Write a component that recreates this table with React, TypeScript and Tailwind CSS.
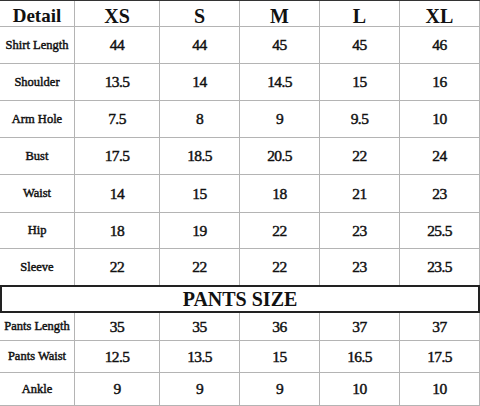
const sizes = ['XS', 'S', 'M', 'L', 'XL'];

type Row = { label: string; values: string[]; h: string; last?: boolean };

const shirtRows: Row[] = [
  { label: 'Shirt Length', values: ['44', '44', '45', '45', '46'], h: 'h-[37px]' },
  { label: 'Shoulder', values: ['13.5', '14', '14.5', '15', '16'], h: 'h-[37px]' },
  { label: 'Arm Hole', values: ['7.5', '8', '9', '9.5', '10'], h: 'h-[37px]' },
  { label: 'Bust', values: ['17.5', '18.5', '20.5', '22', '24'], h: 'h-[37px]' },
  { label: 'Waist', values: ['14', '15', '18', '21', '23'], h: 'h-[38px]' },
  { label: 'Hip', values: ['18', '19', '22', '23', '25.5'], h: 'h-[36px]' },
  { label: 'Sleeve', values: ['22', '22', '22', '23', '23.5'], h: 'h-[36px]', last: true },
];

const pantsRows: Row[] = [
  { label: 'Pants Length', values: ['35', '35', '36', '37', '37'], h: 'h-[28px]' },
  { label: 'Pants Waist', values: ['12.5', '13.5', '15', '16.5', '17.5'], h: 'h-[32px]' },
  { label: 'Ankle', values: ['9', '9', '9', '10', '10'], h: 'h-[33px]' },
];

const cols = 'grid grid-cols-[75px_85px_80px_80px_80px_80px]';
const cell = 'flex items-center justify-center border-r border-[#b4b4b4]';

function SizeRow({ row }: { row: Row }) {
  return (
    <div className={`${cols} ${row.h} ${row.last ? '' : 'border-b border-[#b4b4b4]'}`}>
      <div className={`${cell} text-[12.5px] [-webkit-text-stroke:0.45px_#111]`}>{row.label}</div>
      {row.values.map((v, i) => (
        <div key={i} className={`${cell} text-[15.5px] tracking-[-0.6px] [-webkit-text-stroke:0.45px_#111]`}>{v}</div>
      ))}
    </div>
  );
}

export default function App() {
  return (
    <div className="w-[480px] h-[406px] bg-white text-[#111] overflow-hidden" style={{ fontFamily: '"Liberation Serif", "DejaVu Serif", serif' }}>
      <div className={`${cols} h-[27px] border-t border-t-[#333] border-b border-b-[#b4b4b4]`}>
        <div className={`${cell} text-[19px] font-bold`}>Detail</div>
        {sizes.map((s) => (
          <div key={s} className={`${cell} text-[20px] font-bold`}>{s}</div>
        ))}
      </div>

      {shirtRows.map((row) => (
        <SizeRow key={row.label} row={row} />
      ))}

      <div className="h-[28px] border-2 border-[#222] flex items-center justify-center text-[20px] font-bold">
        PANTS SIZE
      </div>

      {pantsRows.map((row) => (
        <SizeRow key={row.label} row={row} />
      ))}
    </div>
  );
}
